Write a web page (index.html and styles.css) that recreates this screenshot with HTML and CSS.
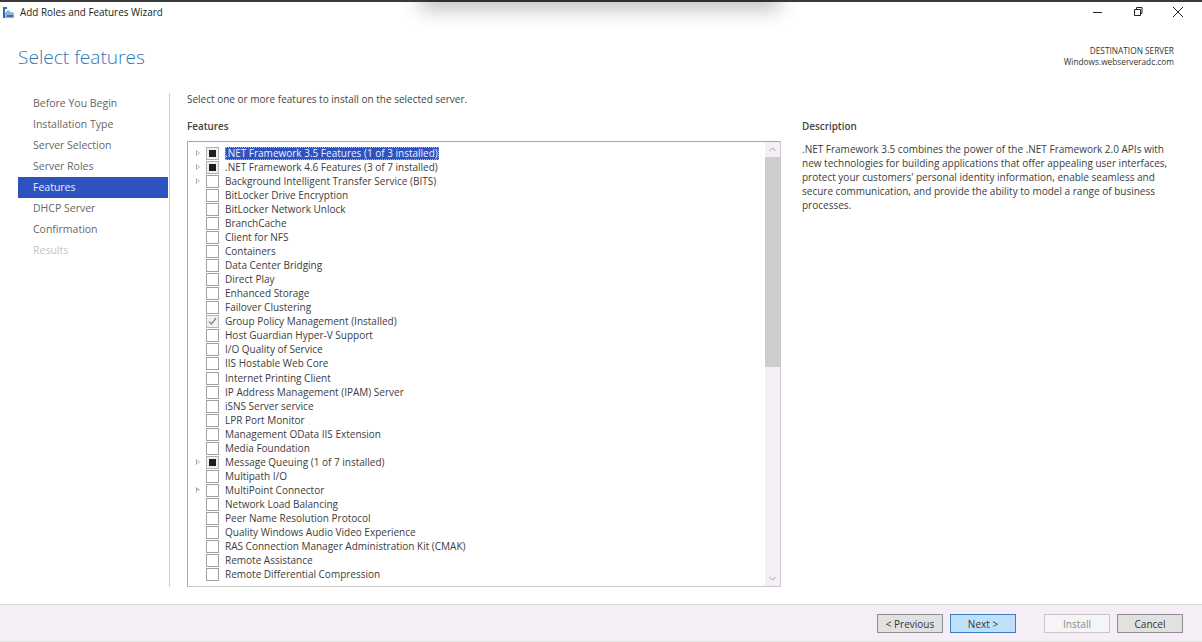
FILE: index.html
```html
<!DOCTYPE html>
<html lang="en">
<head>
<meta charset="utf-8">
<title>Add Roles and Features Wizard</title>
<link rel="stylesheet" href="styles.css">
</head>
<body>
<div class="window">
  <div class="shadow"></div>
  <header class="titlebar">
    <svg class="app-icon" width="13" height="13" viewBox="0 0 13 13"><path d="M1 1h4v2H3v9H1z" fill="#2d6fb0"/><path d="M3 7l3-3 3 2 3 1v5H3z" fill="#8fb4d6"/><path d="M5 9h6v2H5z" fill="#3f6f9f"/></svg>
    <span class="title">Add Roles and Features Wizard</span>
    <div class="controls">
      <svg width="12" height="12" viewBox="0 0 12 12"><path d="M1 6.500h9" stroke="#222" fill="none"/></svg>
      <svg width="12" height="12" viewBox="0 0 12 12"><path d="M2.500 3.500h6v6h-6zM4.500 3.500v-2h5.500v6h-1.500" stroke="#222" fill="none"/></svg>
      <svg width="12" height="12" viewBox="0 0 12 12"><path d="M1 1l10 10M11 1L1 11" stroke="#222" fill="none"/></svg>
    </div>
  </header>
  <div class="heading">
    <h1>Select features</h1>
    <div class="dest">
      <div>DESTINATION SERVER</div>
      <div>Windows.webserveradc.com</div>
    </div>
  </div>
  <div class="content">
    <nav class="steps">
      <div class="step">Before You Begin</div>
      <div class="step">Installation Type</div>
      <div class="step">Server Selection</div>
      <div class="step">Server Roles</div>
      <div class="step active">Features</div>
      <div class="step">DHCP Server</div>
      <div class="step">Confirmation</div>
      <div class="step disabled">Results</div>
    </nav>
    <main class="main">
      <p class="intro">Select one or more features to install on the selected server.</p>
      <div class="columns">
        <section class="features">
          <h2>Features</h2>
          <div class="listbox">
            <div class="rows">
              <div class="row"><i class="arrow"></i><i class="box mixed"></i><span class="label selected">.NET Framework 3.5 Features (1 of 3 installed)</span></div>
              <div class="row"><i class="arrow"></i><i class="box mixed"></i><span class="label">.NET Framework 4.6 Features (3 of 7 installed)</span></div>
              <div class="row"><i class="arrow"></i><i class="box"></i><span class="label">Background Intelligent Transfer Service (BITS)</span></div>
              <div class="row"><i class="noarrow"></i><i class="box"></i><span class="label">BitLocker Drive Encryption</span></div>
              <div class="row"><i class="noarrow"></i><i class="box"></i><span class="label">BitLocker Network Unlock</span></div>
              <div class="row"><i class="noarrow"></i><i class="box"></i><span class="label">BranchCache</span></div>
              <div class="row"><i class="noarrow"></i><i class="box"></i><span class="label">Client for NFS</span></div>
              <div class="row"><i class="noarrow"></i><i class="box"></i><span class="label">Containers</span></div>
              <div class="row"><i class="noarrow"></i><i class="box"></i><span class="label">Data Center Bridging</span></div>
              <div class="row"><i class="noarrow"></i><i class="box"></i><span class="label">Direct Play</span></div>
              <div class="row"><i class="noarrow"></i><i class="box"></i><span class="label">Enhanced Storage</span></div>
              <div class="row"><i class="noarrow"></i><i class="box"></i><span class="label">Failover Clustering</span></div>
              <div class="row"><i class="noarrow"></i><i class="box checked"><svg width="11" height="11" viewBox="0 0 11 11"><path d="M2 5.500l2.500 2.500L9 2" stroke="#8a8a8a" stroke-width="1.400" fill="none"/></svg></i><span class="label">Group Policy Management (Installed)</span></div>
              <div class="row"><i class="noarrow"></i><i class="box"></i><span class="label">Host Guardian Hyper-V Support</span></div>
              <div class="row"><i class="noarrow"></i><i class="box"></i><span class="label">I/O Quality of Service</span></div>
              <div class="row"><i class="noarrow"></i><i class="box"></i><span class="label">IIS Hostable Web Core</span></div>
              <div class="row"><i class="noarrow"></i><i class="box"></i><span class="label">Internet Printing Client</span></div>
              <div class="row"><i class="noarrow"></i><i class="box"></i><span class="label">IP Address Management (IPAM) Server</span></div>
              <div class="row"><i class="noarrow"></i><i class="box"></i><span class="label">iSNS Server service</span></div>
              <div class="row"><i class="noarrow"></i><i class="box"></i><span class="label">LPR Port Monitor</span></div>
              <div class="row"><i class="noarrow"></i><i class="box"></i><span class="label">Management OData IIS Extension</span></div>
              <div class="row"><i class="noarrow"></i><i class="box"></i><span class="label">Media Foundation</span></div>
              <div class="row"><i class="arrow"></i><i class="box mixed"></i><span class="label">Message Queuing (1 of 7 installed)</span></div>
              <div class="row"><i class="noarrow"></i><i class="box"></i><span class="label">Multipath I/O</span></div>
              <div class="row"><i class="arrow"></i><i class="box"></i><span class="label">MultiPoint Connector</span></div>
              <div class="row"><i class="noarrow"></i><i class="box"></i><span class="label">Network Load Balancing</span></div>
              <div class="row"><i class="noarrow"></i><i class="box"></i><span class="label">Peer Name Resolution Protocol</span></div>
              <div class="row"><i class="noarrow"></i><i class="box"></i><span class="label">Quality Windows Audio Video Experience</span></div>
              <div class="row"><i class="noarrow"></i><i class="box"></i><span class="label">RAS Connection Manager Administration Kit (CMAK)</span></div>
              <div class="row"><i class="noarrow"></i><i class="box"></i><span class="label">Remote Assistance</span></div>
              <div class="row"><i class="noarrow"></i><i class="box"></i><span class="label">Remote Differential Compression</span></div>
            </div>
            <div class="scrollbar">
              <svg class="sb-btn" width="15" height="15" viewBox="0 0 15 15"><path d="M4.500 9l3-3 3 3" stroke="#a0a0a0" fill="none"/></svg>
              <div class="thumb"></div>
              <div class="track"></div>
              <svg class="sb-btn" width="15" height="15" viewBox="0 0 15 15"><path d="M4.500 6l3 3 3-3" stroke="#a0a0a0" fill="none"/></svg>
            </div>
          </div>
        </section>
        <aside class="desc">
          <h2>Description</h2>
          <p>.NET Framework 3.5 combines the power of the .NET Framework 2.0 APIs with new technologies for building applications that offer appealing user interfaces, protect your customers' personal identity information, enable seamless and secure communication, and provide the ability to model a range of business processes.</p>
        </aside>
      </div>
    </main>
  </div>
  <footer class="footer">
    <button class="btn">&lt; Previous</button>
    <button class="btn primary">Next &gt;</button>
    <button class="btn off">Install</button>
    <button class="btn">Cancel</button>
  </footer>
</div>
</body>
</html>
```

FILE: styles.css
```css
* { box-sizing: border-box; }
html, body { margin: 0; height: 100%; overflow: hidden; }
body {
  font-family: "Open Sans", "Noto Sans", sans-serif;
  font-size: 10px;
  color: #333;
  background: #fff;
}
.window {
  position: relative;
  width: 1202px;
  height: 642px;
  display: flex;
  flex-direction: column;
  border-top: 2px solid #3c3c3c;
  border-bottom: 1px solid #e2e2e2;
}
.shadow {
  position: absolute;
  left: 424px;
  top: -22px;
  width: 352px;
  height: 20px;
  box-shadow: 0 6px 20px 4px rgba(0,0,0,.24);
}
.titlebar {
  position: relative;
  height: 20px;
  display: flex;
  align-items: center;
  padding-left: 2px;
  gap: 5px;
  color: #222;
}
.title { font-size: 9.900px; }
.controls {
  margin-left: auto;
  display: flex;
  gap: 28px;
  padding-right: 18px;
}
.heading {
  height: 71px;
  display: flex;
  justify-content: space-between;
  padding: 0 28px 0 18px;
}
h1 {
  margin: 21px 0 0;
  font-weight: 300;
  font-size: 19.100px;
  line-height: 28px;
  color: #2f77b5;
}
.dest {
  margin-top: 23px;
  text-align: right;
  font-size: 8.300px;
  line-height: 11px;
  color: #333;
}
.content {
  flex: 1;
  display: flex;
  min-height: 0;
  padding-bottom: 17px;
}
.steps {
  width: 150px;
  margin: 0 1px 0 18px;
  flex: none;
}
.step {
  height: 21px;
  line-height: 21px;
  padding-left: 15px;
  color: #666;
  font-size: 10.500px;
}
.step.active { background: #2f52c1; color: #e8ecf8; }
.step.disabled { color: #c4c4c4; }
.main {
  flex: 1;
  padding-left: 17px;
  border-left: 1px solid #d2d2d2;
  display: flex;
  flex-direction: column;
  min-width: 0;
}
.intro { margin: 0; line-height: 12px; color: #444; }
.columns { flex: 1; display: flex; min-height: 0; margin-top: 14px; }
h2 {
  margin: 0;
  font-size: 9.900px;
  font-weight: 600;
  line-height: 14px;
  color: #444;
}
.features { width: 594px; flex: none; display: flex; flex-direction: column; }
.listbox {
  flex: 1;
  margin-top: 8px;
  display: flex;
  border: 1px solid #a8a8a8;
  border-right-color: #c8c8c8;
  border-bottom-color: #c8c8c8;
  min-height: 0;
}
.rows { flex: 1; padding-top: 4px; overflow: hidden; }
.row {
  height: 14.070px;
  display: flex;
  align-items: center;
  white-space: nowrap;
}
.arrow, .noarrow { width: 18px; flex: none; position: relative; height: 100%; }
.arrow::before {
  content: "";
  position: absolute;
  left: 8px;
  top: 3.500px;
  border-left: 4px solid #a5a5a5;
  border-top: 3.500px solid transparent;
  border-bottom: 3.500px solid transparent;
}
.arrow::after {
  content: "";
  position: absolute;
  left: 8.800px;
  top: 5px;
  border-left: 2.200px solid #fff;
  border-top: 2px solid transparent;
  border-bottom: 2px solid transparent;
}
.box {
  width: 13px;
  height: 13px;
  flex: none;
  border: 1px solid #a0a0a0;
  background: #fff;
  display: flex;
  align-items: center;
  justify-content: center;
}
.box.mixed { background: #f0f0f0; border-color: #b0b0b0; }
.box.mixed::before {
  content: "";
  width: 7px;
  height: 7px;
  background: #1e1e1e;
}
.box.checked { border-color: #b5b5b5; background: #f2f2f2; }
.label { margin-left: 6px; padding: 0 1px 0 0; line-height: 13px; color: #3c3c3c; }
.label.selected {
  background: #2f52c1;
  color: #eef1fb;
  outline: 1px dotted #9fb0e6;
  outline-offset: -1px;
}
.scrollbar {
  width: 15px;
  flex: none;
  display: flex;
  flex-direction: column;
  background: #f5eef6;
}
.sb-btn { flex: none; }
.thumb { height: 210px; background: #cdcdcd; flex: none; }
.track { flex: 1; }
.desc { margin-left: 21px; width: 372px; flex: none; }
.desc p { margin: 9px 0 0; line-height: 14px; color: #3c3c3c; }
.footer {
  height: 37px;
  flex: none;
  background: #f5eef6;
  border-top: 1px solid #ddd9de;
  display: flex;
  align-items: center;
  padding-top: 1px;
  padding-right: 19px;
  justify-content: flex-end;
}
.btn {
  width: 66px;
  height: 19px;
  padding: 0;
  margin-left: 7px;
  font: inherit;
  font-size: 10px;
  color: #333;
  background: #e1e1e1;
  border: 1px solid #8e8e8e;
}
.btn.primary { background: #bfe0fb; border: 1px solid #3b7fc4; }
.btn.off { margin-left: 28px; background: #f5f5f5; border-color: #c8c8c8; color: #8a8a8a; }
```
